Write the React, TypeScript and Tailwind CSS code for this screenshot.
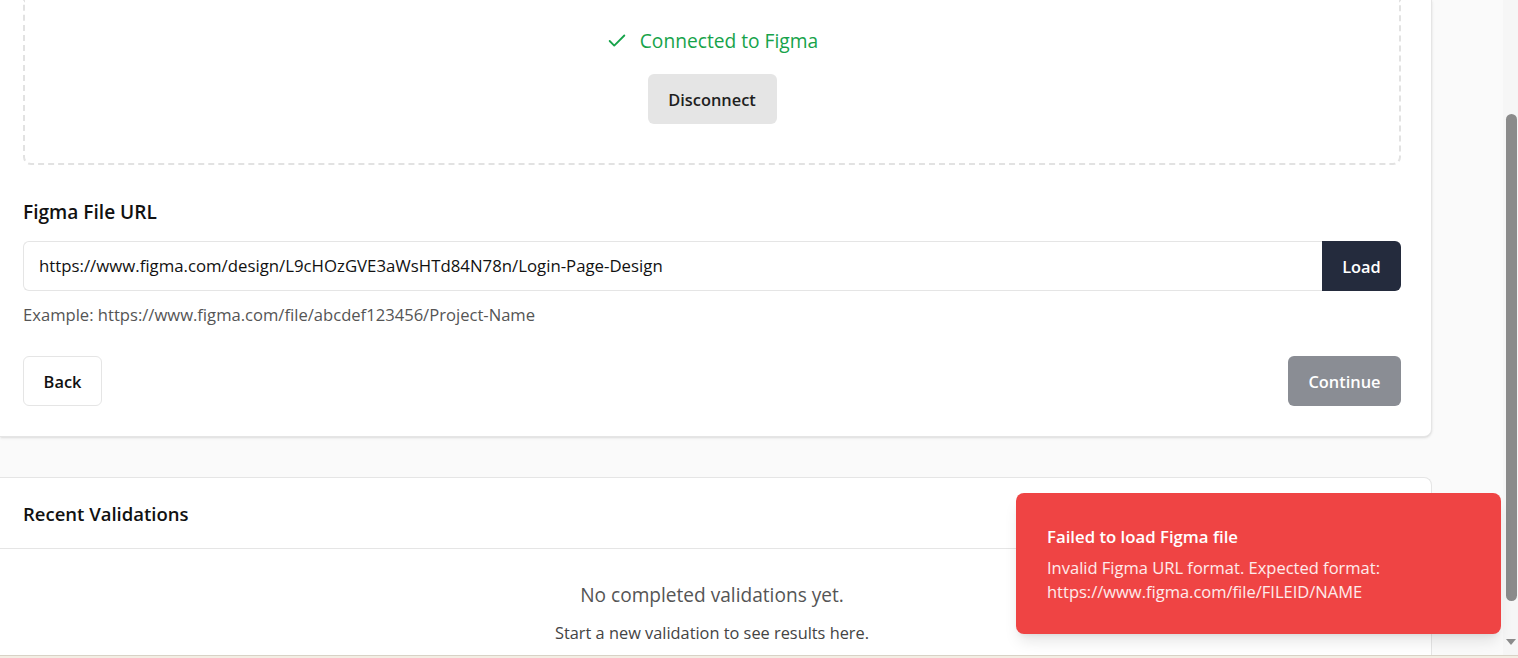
import React from "react";

export default function App() {
  return (
    <div
      className="relative h-[658px] w-[1518px] overflow-hidden bg-[#fafafa] text-[#111]"
      style={{ fontFamily: '"Open Sans", "Noto Sans", sans-serif' }}
    >
      <div className="flex h-full">
        <div className="flex w-[1503px] shrink-0 flex-col">
          {/* top card */}
          <div className="w-[1432px] rounded-br-lg border-r border-b border-[#e5e5e5] bg-white pr-[30px] pl-[23px] pb-[30px] shadow-sm">
            <div className="flex flex-col items-center rounded-b-lg border-2 border-t-0 border-dashed border-[#e2e2e2] pt-[27px] pb-[39px]">
              <div className="flex h-[28px] items-center gap-[12px] text-[19.2px] text-[#16a34a]">
                <svg width="22" height="22" viewBox="0 0 24 24" fill="none" stroke="currentColor" strokeWidth="2" strokeLinecap="round" strokeLinejoin="round">
                  <path d="M20 6 9 17l-5-5" />
                </svg>
                <span>Connected to Figma</span>
              </div>
              <button className="mt-[19px] flex h-[50px] w-[129px] items-center justify-center rounded-md bg-[#e5e5e5] pt-[2px] text-[16.4px] font-semibold text-[#1f1f1f]">
                Disconnect
              </button>
            </div>

            <div className="mt-[33px] h-[28px] text-[19.1px] leading-[28px] font-semibold text-[#111]">Figma File URL</div>
            <div className="mt-[15px] flex h-[50px]">
              <div className="flex flex-1 items-center rounded-l-md border border-r-0 border-[#e5e5e5] pl-[15px] text-[16.8px] text-[#111]">
                https://www.figma.com/design/L9cHOzGVE3aWsHTd84N78n/Login-Page-Design
              </div>
              <button className="flex h-[50px] w-[79px] items-center justify-center rounded-r-md bg-[#242b3d] pt-[2px] text-[16.4px] font-semibold text-white">
                Load
              </button>
            </div>
            <div className="mt-[13px] h-[22px] text-[16.6px] leading-[22px] text-[#555]">
              Example: https://www.figma.com/file/abcdef123456/Project-Name
            </div>
            <div className="mt-[30px] flex justify-between">
              <button className="flex h-[50px] w-[79px] items-center justify-center rounded-md border border-[#e5e5e5] bg-white pt-[2px] text-[16.4px] font-semibold text-[#111]">
                Back
              </button>
              <button className="flex h-[50px] w-[113px] items-center justify-center rounded-md bg-[#8a8d94] pt-[2px] text-[16.4px] font-semibold text-white">
                Continue
              </button>
            </div>
          </div>

          {/* recent validations */}
          <div className="mt-[40px] w-[1432px] flex-1 rounded-tr-lg border-t border-r border-[#e5e5e5] bg-white">
            <div className="border-b border-[#e5e5e5] pr-[30px] pl-[23px] pt-[22px] pb-[20px]">
              <div className="h-[28px] text-[18.5px] leading-[28px] font-semibold text-[#111]">Recent Validations</div>
            </div>
            <div className="flex flex-col items-center pr-[30px] pl-[23px] pt-[32px]">
              <div className="h-[28px] text-[19.1px] leading-[28px] text-[#555]">No completed validations yet.</div>
              <div className="mt-[13px] h-[22px] text-[16.35px] leading-[22px] text-[#444]">
                Start a new validation to see results here.
              </div>
            </div>
          </div>
        </div>

        {/* scrollbar */}
        <div className="relative h-full w-[15px] bg-[#f6f6f6]">
          <div className="absolute top-[114px] left-[3px] h-[487px] w-[11px] rounded-full bg-[#8b8b8b]" />
          <div className="absolute top-[639px] left-[3px] h-0 w-0 border-x-[5px] border-t-[6px] border-x-transparent border-t-[#8b8b8b]" />
        </div>
      </div>

      {/* bottom edge */}
      <div className="absolute bottom-0 left-0 h-[3px] w-full border-t border-[#d8d2c6] bg-[#f3eee4]" />

      {/* toast */}
      <div className="absolute top-[493px] left-[1016px] flex h-[141px] w-[485px] flex-col justify-center rounded-lg bg-[#ef4444] pt-[2px] pr-[20px] pl-[31px] shadow-lg">
        <div className="text-[16.75px] leading-[22px] font-semibold text-white">Failed to load Figma file</div>
        <div className="mt-[8px] text-[16.5px] leading-[24px] text-white/90">
          Invalid Figma URL format. Expected format:
          <br />
          https://www.figma.com/file/FILEID/NAME
        </div>
      </div>
    </div>
  );
}
